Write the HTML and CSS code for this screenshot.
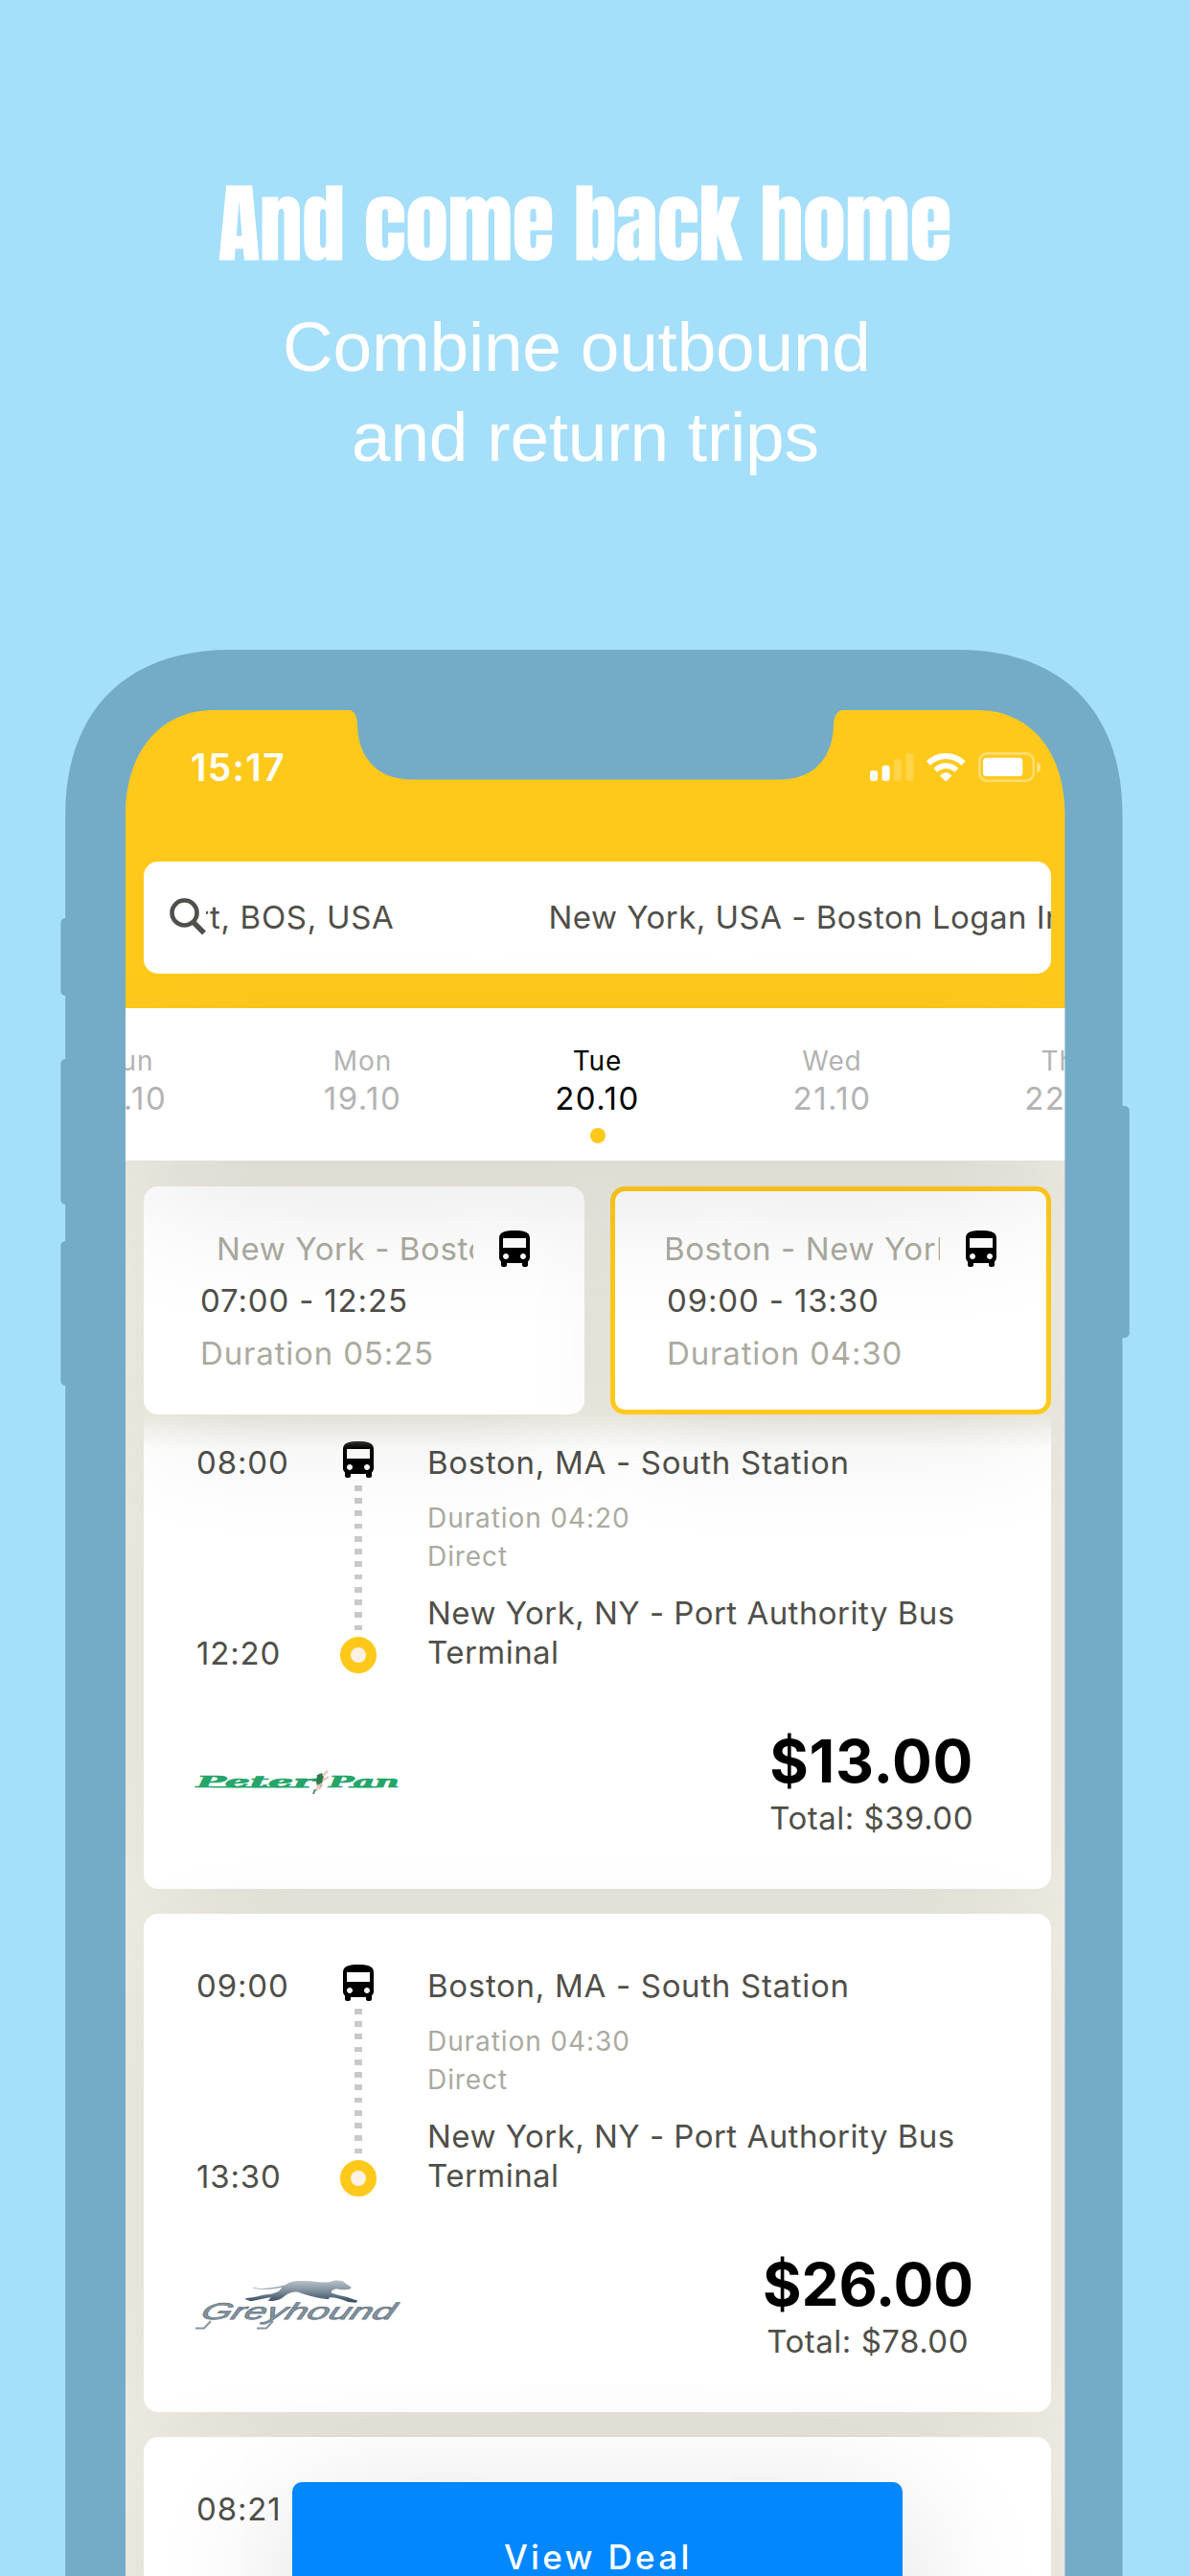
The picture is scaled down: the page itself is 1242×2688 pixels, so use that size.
FILE: index.html
```html
<!DOCTYPE html>
<html lang="en">
<head>
<meta charset="utf-8">
<title>And come back home</title>
<link rel="stylesheet" href="styles.css">
</head>
<body>
<svg class="defs" aria-hidden="true">
  <symbol id="bus" viewBox="4 2 16 19"><path d="M4 16c0 .88.39 1.67 1 2.22V20c0 .55.45 1 1 1h1c.55 0 1-.45 1-1v-1h8v1c0 .55.45 1 1 1h1c.55 0 1-.45 1-1v-1.78c.61-.55 1-1.34 1-2.22V6c0-3.5-3.58-4-8-4s-8 .5-8 4v10zm3.5 1c-.83 0-1.5-.67-1.5-1.5S6.67 14 7.5 14s1.5.67 1.5 1.5S8.33 17 7.5 17zm9 0c-.83 0-1.5-.67-1.5-1.5s.67-1.5 1.5-1.5 1.5.67 1.5 1.5-.67 1.5-1.5 1.5zm1.5-6H6V6h12v5z"/></symbol>
</svg>

<header class="hero">
  <h1 class="hero-title">And come back home</h1>
  <p class="hero-line hero-line-first">Combine outbound</p>
  <p class="hero-line hero-line-second">and return trips</p>
</header>

<main class="phone">
  <div class="screen">
    <section class="topbar">
      <div class="status">
        <span class="clock">15:17</span>
        <svg class="status-icons" width="178" height="31" viewBox="0 0 178 31">
          <g fill="#fff">
            <rect x="0" y="19" width="8" height="11" rx="2.4"/>
            <rect x="12.6" y="13.7" width="8" height="16.3" rx="2.4"/>
            <g opacity=".2"><rect x="25" y="7.3" width="8" height="22.7" rx="2.4"/><rect x="37.4" y="1" width="8" height="29" rx="2.4"/></g>
            <path d="M73 24.5Q79.2 17.5 85.4 24.5L79.2 30.5Z"/>
            <rect x="118" y="5.8" width="41.3" height="19.2" rx="3.5"/>
            <path d="M174.2 10v11.5q3.8-1.500 3.800-5.700t-3.800-5.800z" opacity=".45"/>
          </g>
          <g fill="none" stroke="#fff">
            <path d="M61 11.500A26 26 0 0 1 97.500 11.500" stroke-width="6"/>
            <path d="M68.300 18.700A15.500 15.500 0 0 1 90.200 18.700" stroke-width="5.600"/>
            <rect x="114.200" y="1.200" width="56.500" height="28.600" rx="8" stroke-width="2.400" opacity=".4"/>
          </g>
        </svg>
      </div>
      <div class="search">
        <svg class="search-icon" width="38" height="40" viewBox="0 0 38 40"><g fill="none" stroke="#504f49" stroke-width="4.600"><circle cx="15.500" cy="15.500" r="13"/><path d="M25 25.500L36 36.500" stroke-width="5.400"/></g></svg>
        <span class="search-tail"><span>rt, BOS, USA</span></span>
        <span class="search-next">New York, USA - Boston Logan Int</span>
      </div>
    </section>

    <nav class="dates">
      <div class="date"><span class="day">Sun</span><span class="num">18.10</span></div>
      <div class="date"><span class="day">Mon</span><span class="num">19.10</span></div>
      <div class="date date-on"><span class="day">Tue</span><span class="num">20.10</span><i class="dot"></i></div>
      <div class="date"><span class="day">Wed</span><span class="num">21.10</span></div>
      <div class="date"><span class="day">Thu</span><span class="num">22.10</span></div>
    </nav>

    <section class="legs">
      <article class="leg">
        <div class="leg-row"><span class="route route-out">New York - Boston</span><svg class="bus"><use href="#bus"/></svg></div>
        <p class="leg-time">07:00 - 12:25</p>
        <p class="leg-duration">Duration 05:25</p>
      </article>
      <article class="leg leg-on">
        <div class="leg-row"><span class="route route-back">Boston - New York</span><svg class="bus"><use href="#bus"/></svg></div>
        <p class="leg-time">09:00 - 13:30</p>
        <p class="leg-duration">Duration 04:30</p>
      </article>
    </section>

    <section class="results">
      <article class="trip">
        <div class="trip-main">
          <div class="times"><span>08:00</span><span>12:20</span></div>
          <div class="rail"><svg class="bus"><use href="#bus"/></svg><i class="dashes"></i><i class="ring"></i></div>
          <div class="stops">
            <p class="stop">Boston, MA - South Station</p>
            <p class="meta">Duration 04:20<br>Direct</p>
            <p class="stop stop-end">New York, NY - Port Authority Bus<br>Terminal</p>
          </div>
        </div>
        <div class="trip-foot">
          <svg class="logo" width="214" height="60" viewBox="0 0 214 60">
            <g fill="#25a56a" stroke="#25a56a" stroke-width=".7" font-family="DejaVu Serif, serif" font-weight="700" font-style="italic" font-size="16.500">
              <text x="1" y="36" textLength="123" lengthAdjust="spacingAndGlyphs">Peter</text>
              <text x="139" y="36" textLength="74" lengthAdjust="spacingAndGlyphs">Pan</text>
              <path d="M18 35H119L118.500 36.500H17ZM160 35H190L189.500 36.500H159Z" stroke="none"/>
            </g>
            <path d="M127 23l5-2 2 4-2 7-5 3-1-5z" fill="#2f7a4d"/>
            <path d="M133 24l5-5M133 29l6-4M129 33l-3 7" stroke="#e2cdb8" stroke-width="2.500"/>
            <path d="M130 31l3 3-4 5z" fill="#cdb69c"/>
            <path d="M125 38l-2 5" stroke="#4b8f63" stroke-width="2"/>
          </svg>
          <div class="cost"><strong>$13.00</strong><span>Total: $39.00</span></div>
        </div>
      </article>

      <article class="trip">
        <div class="trip-main">
          <div class="times"><span>09:00</span><span>13:30</span></div>
          <div class="rail"><svg class="bus"><use href="#bus"/></svg><i class="dashes"></i><i class="ring"></i></div>
          <div class="stops">
            <p class="stop">Boston, MA - South Station</p>
            <p class="meta">Duration 04:30<br>Direct</p>
            <p class="stop stop-end">New York, NY - Port Authority Bus<br>Terminal</p>
          </div>
        </div>
        <div class="trip-foot">
          <svg class="logo" width="214" height="60" viewBox="0 0 214 60">
            <defs>
              <linearGradient id="steel" x1="0" y1="0" x2="0" y2="1"><stop offset="0" stop-color="#b9c4cc"/><stop offset=".5" stop-color="#7d8d9a"/><stop offset="1" stop-color="#34495a"/></linearGradient>
            </defs>
            <g transform="translate(-14 -15) scale(.3333)">
              <path d="M222 80C250 88 295 82 325 72C340 60 360 58 400 61C430 64 450 66 462 64C478 56 490 58 503 61C512 70 528 76 530 82C525 90 505 88 490 86C478 84 466 90 468 98C490 105 520 110 532 116L550 122L545 128L520 126C500 118 480 112 462 112L458 118L446 116C430 114 400 108 372 98C350 90 335 98 318 110C305 122 280 124 270 122L278 112C250 116 240 120 215 124L196 117L205 113C235 112 245 104 275 102C295 98 310 90 312 80C290 86 245 90 222 82Z" fill="url(#steel)"/>
            </g>
            <text transform="translate(4 45) skewX(-22)" x="0" y="0" textLength="201" lengthAdjust="spacingAndGlyphs" fill="#8795a1" stroke="#6d7d8a" stroke-width=".8" font-family="Liberation Sans, sans-serif" font-style="italic" font-weight="400" font-size="24">Greyhound</text>
            <path d="M0 54.500H9L16 47M64 54.500H74L81 47" fill="none" stroke="#8795a1" stroke-width="2"/>
          </svg>
          <div class="cost cost-wide"><strong>$26.00</strong><span>Total: $78.00</span></div>
        </div>
      </article>

      <article class="trip">
        <div class="trip-main"><div class="times"><span>08:21</span></div></div>
      </article>
    </section>

    <button class="deal">View Deal</button>
  </div>

  <svg class="frame" width="1242" height="2010" viewBox="0 678 1242 2010">
    <g fill="#74acc8">
      <rect x="63.400" y="958" width="12" height="81" rx="5"/>
      <rect x="63.400" y="1105" width="12" height="152" rx="5"/>
      <rect x="63.400" y="1295" width="12" height="151" rx="5"/>
      <rect x="1167" y="1154" width="11.800" height="242" rx="5"/>
      <path fill-rule="evenodd" d="M68.200 2700V850C68.200 742 132 678 240 678H1000C1108 678 1171.500 742 1171.500 850V2700ZM131 2700V850C131 782 170 741 222 741H365C370 742 373 748 373 757C374 792 395 813.500 430 813.500H814C848 813.500 869 792 870 757C870 748 873 742 879 741H1021C1073 741 1111.400 782 1111.400 850V2700Z"/>
    </g>
  </svg>
</main>
</body>
</html>
```
FILE: styles.css
```css
* { box-sizing: border-box; }
body {
  margin: 0;
  width: 1242px;
  height: 2688px;
  overflow: hidden;
  background: #a5dffa;
  font-family: Inter, "Liberation Sans", sans-serif;
  font-size: 33px;
  color: #504f49;
}
p, h1 { margin: 0; font-weight: 400; }
.defs { display: none; }

.hero { height: 678px; padding-top: 173px; color: #fff; white-space: nowrap; }
.hero-title {
  margin-left: 228px;
  font: 400 89px/120px Anton, "Roboto Condensed", sans-serif;
  letter-spacing: -.2px;
  -webkit-text-stroke: 1px #fff;
}
.hero-line { font: 73px/94px "Liberation Sans", Arial, sans-serif; letter-spacing: -.2px; }
.hero-line-first { margin: 22px 0 0 295px; }
.hero-line-second { margin-left: 367px; }

.phone { position: relative; height: 2010px; padding: 63px 0 0 131px; }
.screen {
  position: relative;
  width: 981px;
  height: 1947px;
  overflow: hidden;
  background: #eeebe3;
}
.frame { position: absolute; left: 0; top: 0; z-index: 10; }

.topbar { height: 311px; padding: 0 15px 0 19px; background: #ffc91c; }
.status {
  display: flex;
  justify-content: space-between;
  align-items: flex-start;
  height: 157.500px;
  padding: 36px 11.500px 0 49px;
  color: #fff;
}
.clock { font-size: 39px; line-height: 48px; font-weight: 600; letter-spacing: 1.300px; }
.status-icons { margin-top: 8px; }
.search {
  display: flex;
  align-items: center;
  height: 117px;
  padding-left: 26.500px;
  border-radius: 15px;
  background: #fff;
  overflow: hidden;
  white-space: nowrap;
}
.search-icon { flex: none; }
.search-tail {
  display: flex;
  flex: none;
  justify-content: flex-end;
  width: 197px;
  overflow: hidden;
  letter-spacing: .7px;
}
.search-next { flex: none; margin-left: 161px; letter-spacing: .48px; }

.dates {
  position: relative;
  z-index: 3;
  display: grid;
  grid-template-columns: repeat(5, 245px);
  height: 159px;
  padding: 36.800px 0 0 4px;
  background: #fff;
  justify-content: center;
  box-shadow: 0 50px 150px -15px rgba(0, 0, 0, .11);
}
.date { display: flex; flex-direction: column; align-items: center; color: #b3b3b3; }
.date-on { color: #000; }
.day { font-size: 28px; line-height: 36px; letter-spacing: .9px; }
.num { line-height: 42px; letter-spacing: 1.500px; }
.dot { width: 16px; height: 16px; margin: 10px 0 0; border-radius: 50%; background: #ffc91c; }

.legs {
  position: relative;
  z-index: 2;
  display: flex;
  gap: 27px;
  margin: 0 15px 0 19px;
  padding: 27px 0 36px;
  background: linear-gradient(#eeebe3 0, #eeebe3 88%, rgba(238, 235, 227, 0));
}
.leg {
  width: 460px;
  height: 238px;
  padding: 37.500px 0 0 59px;
  border-radius: 15px;
  background: #fff;
  box-shadow: 0 45px 120px -12px rgba(0, 0, 0, .065);
}
.leg-on { border: 5px solid #ffc91c; padding: 32.500px 0 0 54px; }
.leg-row { display: flex; align-items: center; height: 54.500px; }
.leg p { line-height: 54.500px; letter-spacing: .84px; }
.route {
  width: 285px;
  overflow: hidden;
  white-space: nowrap;
  line-height: 54.500px;
  letter-spacing: .6px;
  color: #abaa9f;
}
.route-out { text-indent: 17px; }
.route-back { text-indent: -3px; }
.leg .leg-duration { color: #abaa9f; }
.bus { display: block; flex: none; width: 32px; height: 38px; fill: #000; }
.leg-row .bus { margin-left: 26.500px; }

.results {
  display: flex;
  flex-direction: column;
  gap: 26.500px;
  margin: -61px 15px 0 19px;
}
.trip {
  position: relative;
  flex: none;
  height: 519.500px;
  padding: 53px 84px 0 55px;
  border-radius: 15px;
  background: #fff;
  box-shadow: 0 25px 120px -20px rgba(0, 0, 0, .075);
}
.trip-main { display: grid; grid-template-columns: 150px 38px 1fr; height: 242px; }
.times {
  display: flex;
  flex-direction: column;
  justify-content: space-between;
  padding-top: 2px;
  line-height: 41px;
  letter-spacing: .85px;
}
.rail { display: flex; flex-direction: column; align-items: center; }
.dashes {
  width: 8px;
  height: 151.200px;
  margin: 7.500px 0 7.300px;
  background: repeating-linear-gradient(#c9c9c9 0 5.700px, transparent 5.700px 13.230px);
}
.ring { width: 38px; height: 38px; border: 11px solid #ffc91c; border-radius: 50%; background: #fdf1e3; }
.stops { padding: 2px 0 0 53px; white-space: nowrap; }
.stop { line-height: 41px; letter-spacing: .7px; }
.stop-end { letter-spacing: .47px; }
.meta { margin: 18px 0 19px; font-size: 28px; line-height: 39.500px; letter-spacing: .92px; color: #abaa9f; }
.trip-foot { display: flex; justify-content: space-between; align-items: center; margin-top: 61px; height: 110px; }
.logo { margin: 0 0 6px -1px; overflow: visible; }
.cost { display: flex; flex-direction: column; align-items: flex-end; gap: 8px; }
.cost strong { font-size: 62px; line-height: 62px; font-weight: 700; letter-spacing: .7px; color: #000; margin-right: -3px; }
.cost span { line-height: 40px; letter-spacing: .5px; margin-right: -3px; }
.cost-wide strong { letter-spacing: -.1px; }
.cost-wide span { margin-right: 2px; }

.deal {
  position: absolute;
  z-index: 5;
  left: 173.500px;
  top: 1848.500px;
  width: 637.500px;
  height: 160px;
  padding: 57px 0 0 2px;
  border: 0;
  border-radius: 10px;
  background: #0287ff;
  color: #fff;
  font: 500 35px/42px Inter, sans-serif;
  letter-spacing: 3.300px;
  display: flex;
  justify-content: center;
  align-items: flex-start;
  box-shadow: 0 40px 150px rgba(0, 0, 0, .16);
}
```
